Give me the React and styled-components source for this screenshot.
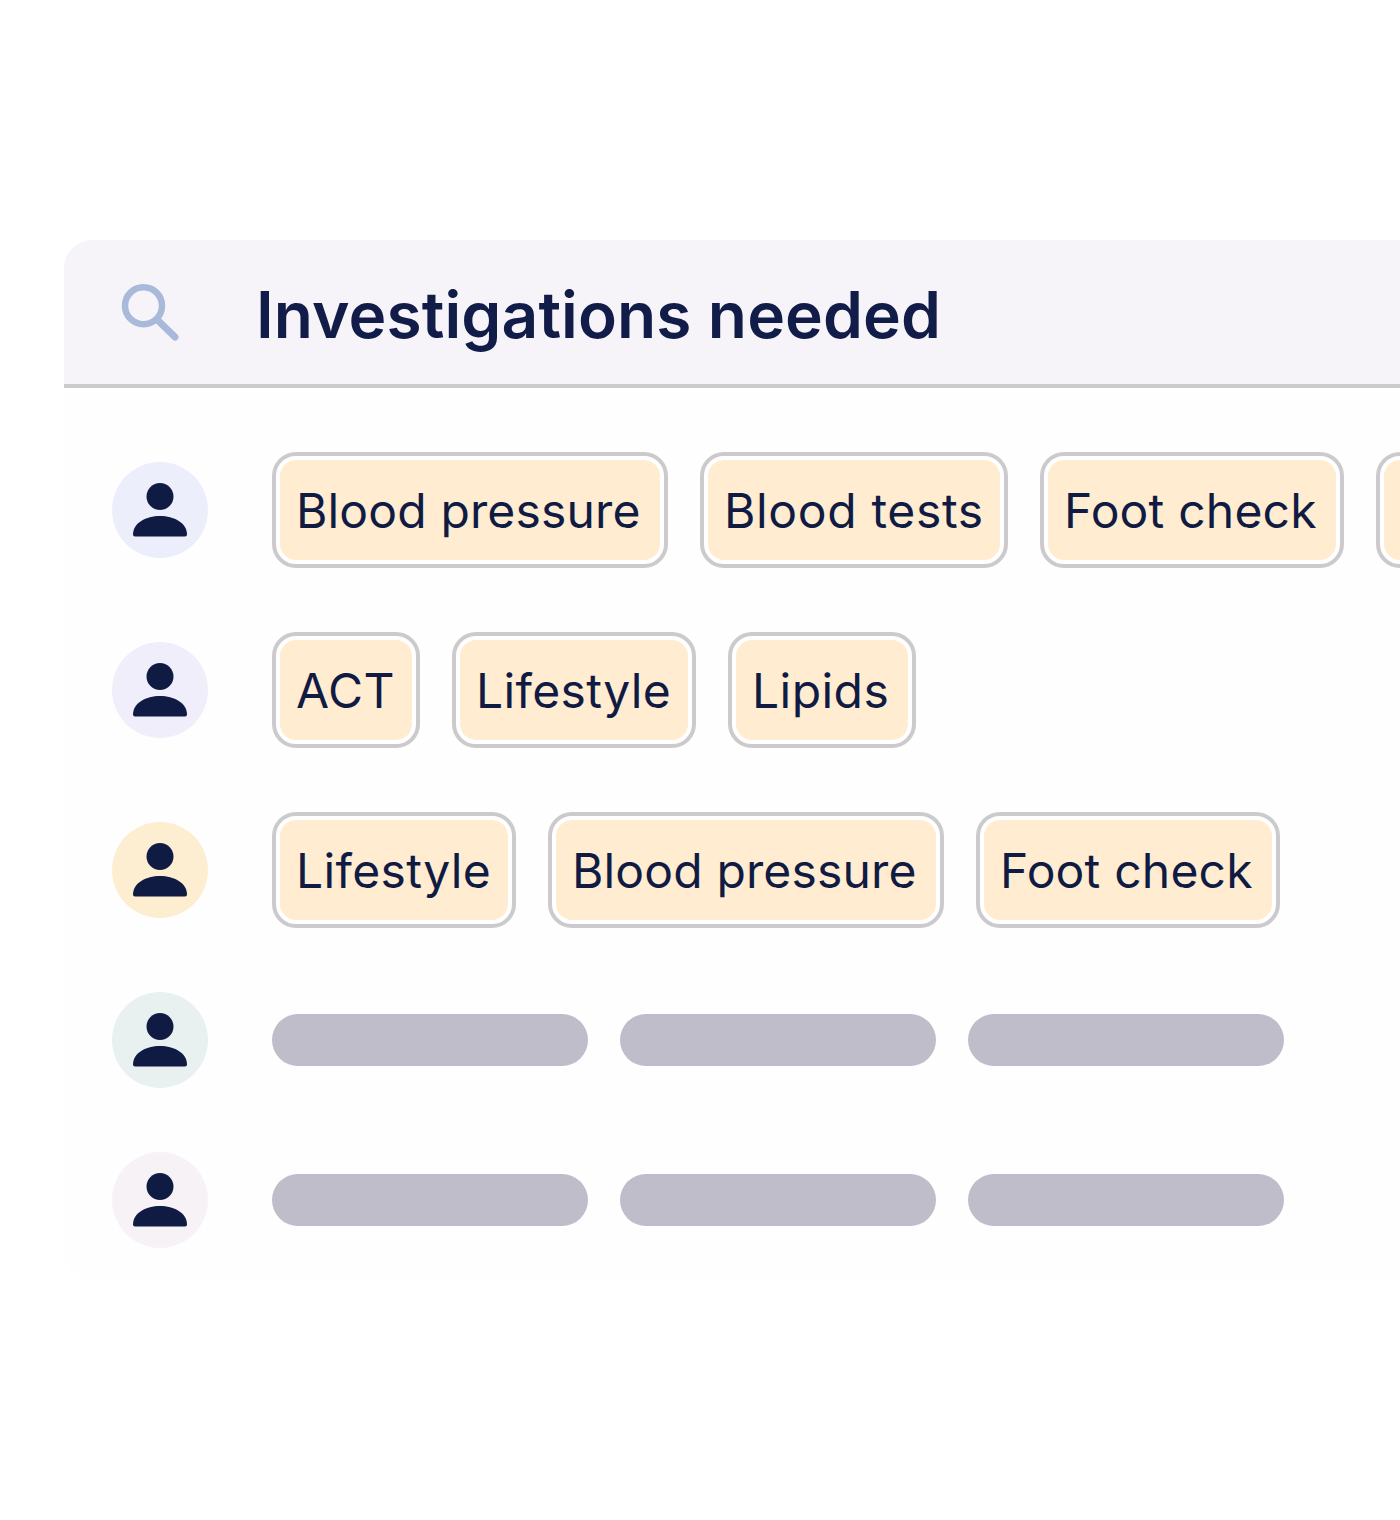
import styled, { createGlobalStyle } from "styled-components";

const GlobalStyle = createGlobalStyle`
  html, body {
    margin: 0;
    padding: 0;
    background: #fff;
  }
`;

const Page = styled.main`
  width: 1400px;
  height: 1520px;
  padding: 240px 0 0 64px;
  box-sizing: border-box;
  overflow: hidden;
  background: #fff;
  font-family: Inter, "Liberation Sans", sans-serif;
  color: #121c48;
`;

const Panel = styled.section`
  width: 1400px;
  height: 1040px;
  background: #fefefe;
  border-radius: 28px;
  overflow: hidden;
`;

const Header = styled.header`
  height: 148px;
  box-sizing: border-box;
  display: flex;
  align-items: center;
  padding: 0 0 0 56px;
  gap: 76px;
  background: #f6f4f8;
  border-bottom: 4px solid #cccacd;
`;

const Title = styled.h1`
  margin: 6px 0 0;
  font-size: 64px;
  line-height: 72px;
  font-weight: 600;
  letter-spacing: 0.12px;
  color: #121c48;
`;

const Rows = styled.div`
  display: flex;
  flex-direction: column;
  gap: 64px;
  padding: 64px 0 32px 48px;
`;

const Row = styled.div`
  display: flex;
  align-items: center;
  gap: 64px;
`;

const Avatar = styled.div`
  flex: none;
  width: 96px;
  height: 96px;
  border-radius: 50%;
  display: flex;
  align-items: center;
  justify-content: center;
  background: ${(p) => p.$tint};
`;

const Items = styled.div`
  display: flex;
  gap: 32px;
`;

const Chip = styled.div`
  flex: none;
  box-sizing: border-box;
  width: ${(p) => p.$width}px;
  padding: 4px;
  border: 4px solid #cccacd;
  border-radius: 24px;
  background: #fff;
`;

const ChipLabel = styled.span`
  display: block;
  padding: 0 0 0 16px;
  height: 100px;
  line-height: 102px;
  font-size: 48px;
  font-weight: 400;
  letter-spacing: ${(p) => p.$tracking}px;
  white-space: nowrap;
  color: #101b44;
  background: #ffecd1;
  border-radius: 16px;
`;

const Placeholder = styled.div`
  width: 316px;
  height: 52px;
  border-radius: 26px;
  background: #bfbdca;
`;

const SearchIcon = () => (
  <svg width="60" height="60" viewBox="0 0 60 60" fill="none">
    <circle cx="23.500" cy="23.700" r="18.500" stroke="#a9b9da" strokeWidth="6.500" />
    <path d="M39 39.500 L55 55" stroke="#a9b9da" strokeWidth="7" strokeLinecap="round" />
  </svg>
);

const PersonIcon = () => (
  <svg width="56" height="56" viewBox="0 0 56 56" fill="#101b44">
    <circle cx="28" cy="14.500" r="13.500" />
    <path d="M1 52.500 C1 41 14 34 28 34 C42 34 55 41 55 52.500 Q55 54.500 53 54.500 L3 54.500 Q1 54.500 1 52.500 Z" />
  </svg>
);

const chipSizes = {
  "Blood pressure": { width: 396, tracking: 0.15 },
  "Blood tests": { width: 308, tracking: 0.65 },
  "Foot check": { width: 304, tracking: 0.2 },
  ACT: { width: 148, tracking: 0.5 },
  Lifestyle: { width: 244, tracking: 0.35 },
  Lipids: { width: 188, tracking: 0.45 },
  "": { width: 120, tracking: 0 },
};

const rows = [
  { tint: "#eceefb", chips: ["Blood pressure", "Blood tests", "Foot check", ""] },
  { tint: "#f1eefb", chips: ["ACT", "Lifestyle", "Lipids"] },
  { tint: "#fdeed2", chips: ["Lifestyle", "Blood pressure", "Foot check"] },
  { tint: "#e9f0f0", chips: [] },
  { tint: "#f6f2f5", chips: [] },
];

const App = () => {
  return (
    <Page>
      <GlobalStyle />
      <Panel>
        <Header>
          <SearchIcon />
          <Title>Investigations needed</Title>
        </Header>
        <Rows>
          {rows.map((row, i) => (
            <Row key={i}>
              <Avatar $tint={row.tint}>
                <PersonIcon />
              </Avatar>
              <Items>
                {row.chips.length > 0
                  ? row.chips.map((chip) => (
                      <Chip key={chip} $width={chipSizes[chip].width}>
                        <ChipLabel $tracking={chipSizes[chip].tracking}>{chip}</ChipLabel>
                      </Chip>
                    ))
                  : [0, 1, 2].map((n) => <Placeholder key={n} />)}
              </Items>
            </Row>
          ))}
        </Rows>
      </Panel>
    </Page>
  );
};

export default App;
